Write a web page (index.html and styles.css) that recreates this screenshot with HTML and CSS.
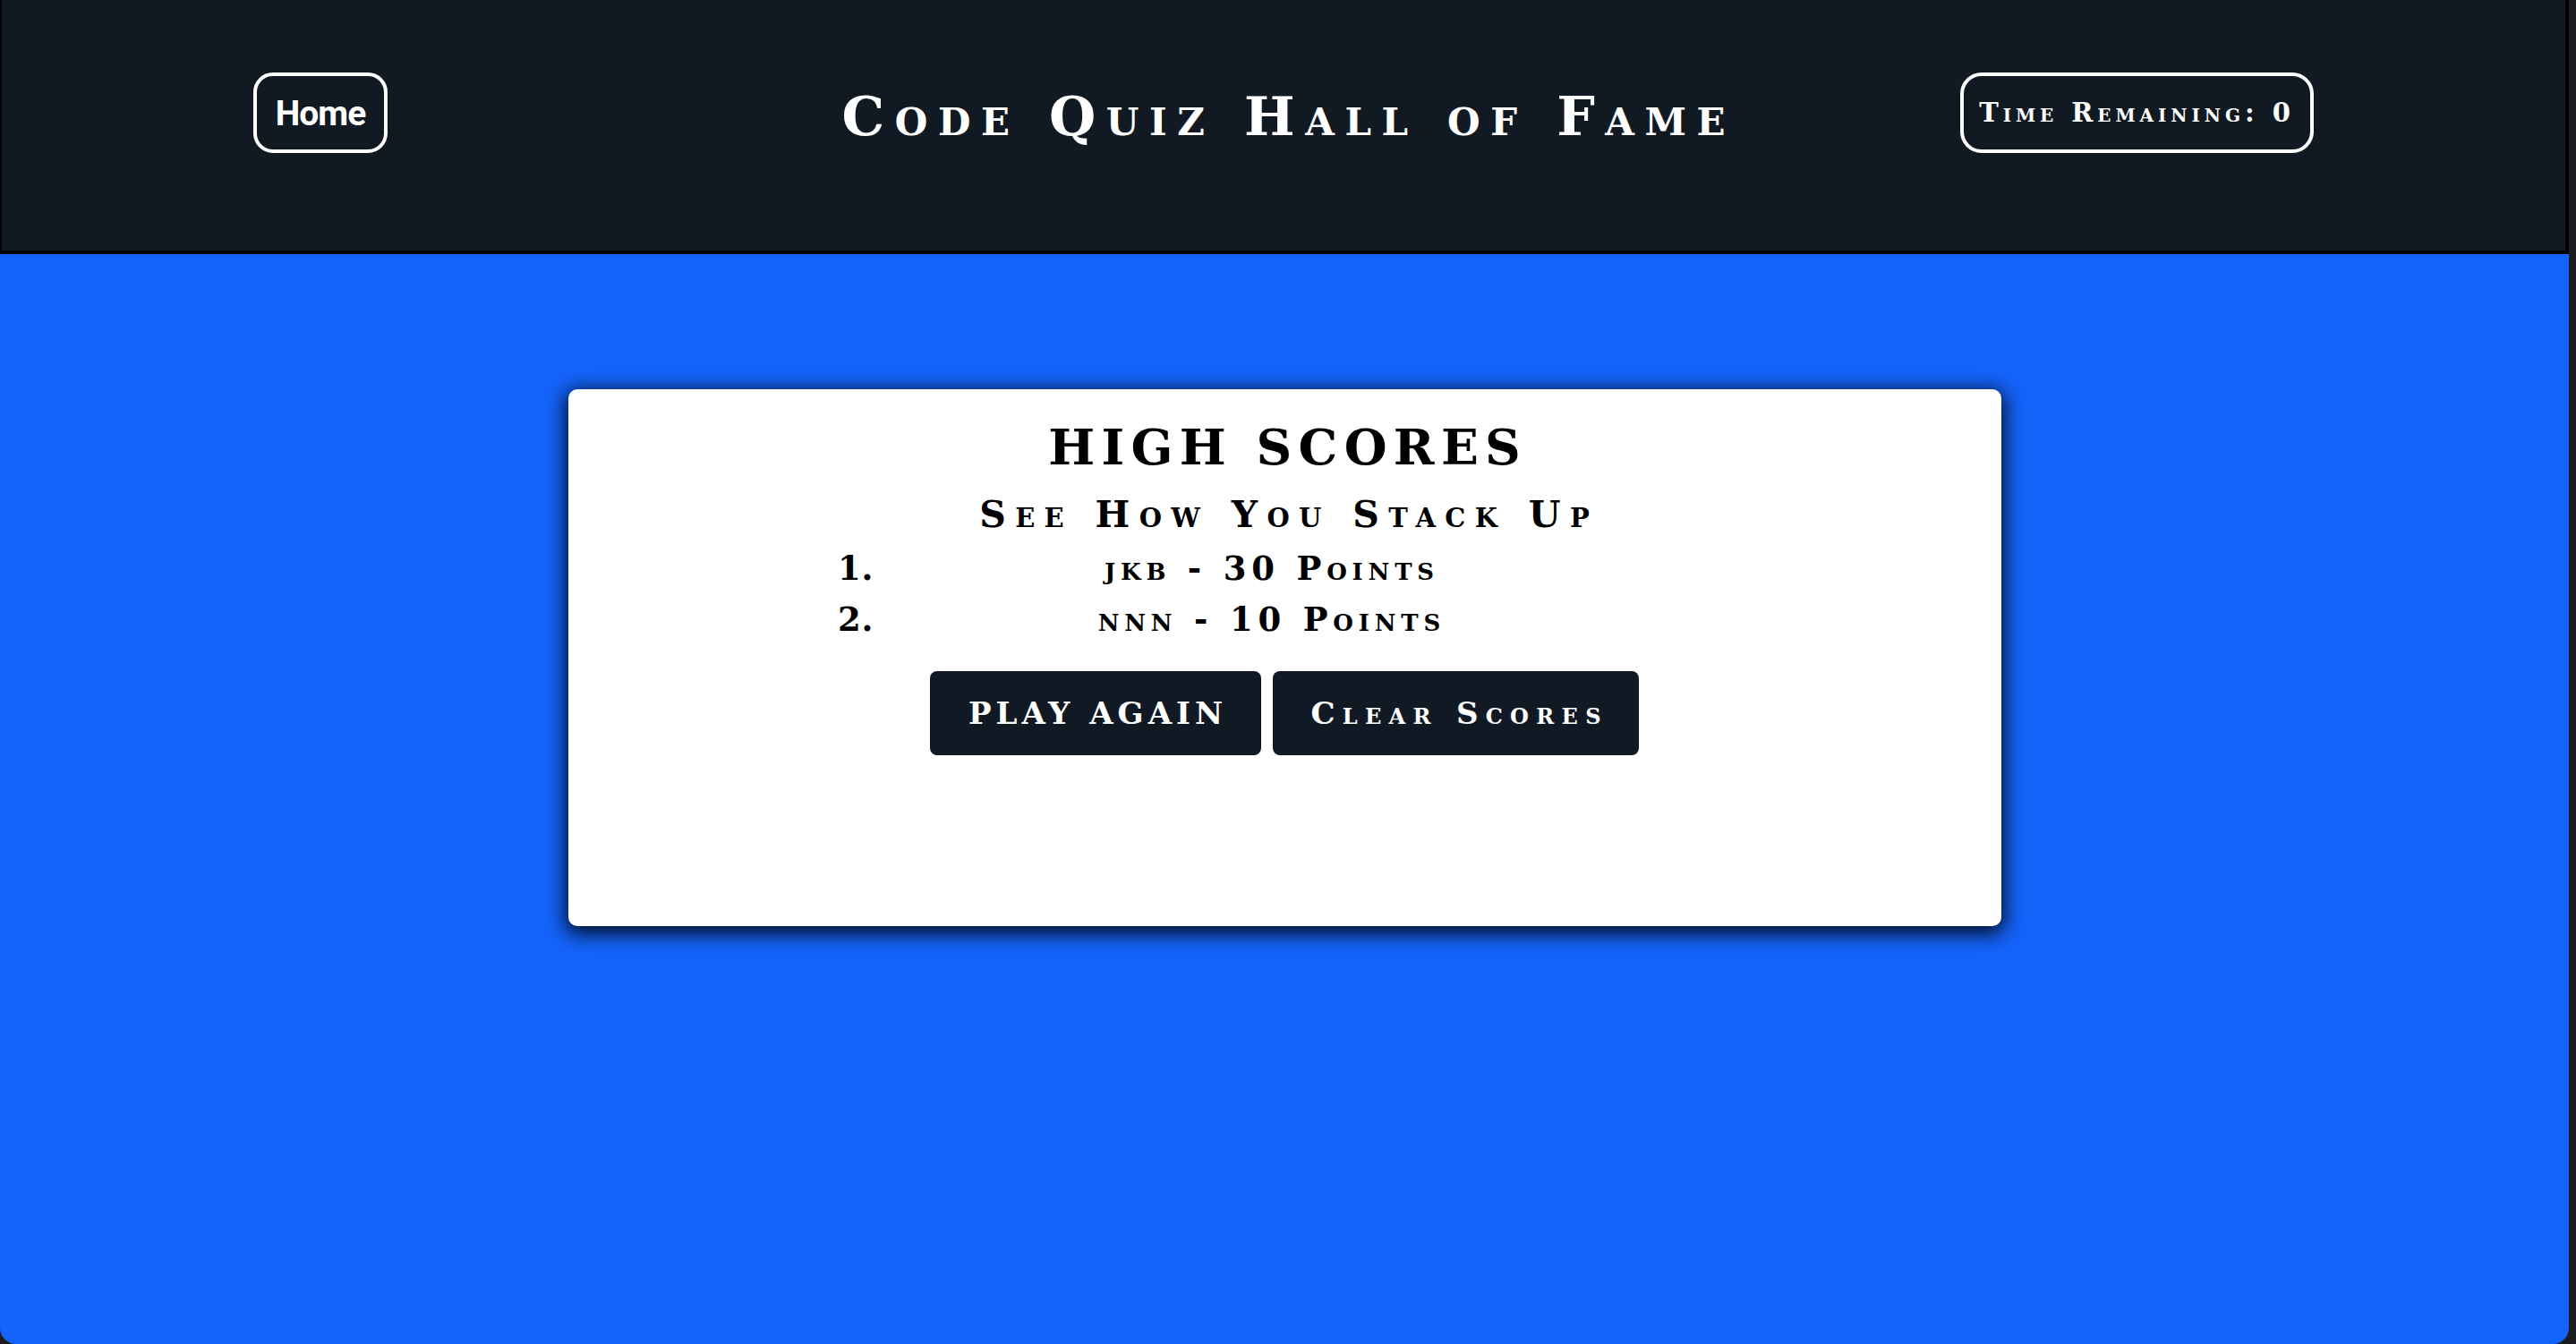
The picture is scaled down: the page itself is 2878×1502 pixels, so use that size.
FILE: index.html
```html
<!DOCTYPE html>
<html lang="en">
<head>
<meta charset="utf-8">
<title>Code Quiz Hall of Fame</title>
<link rel="stylesheet" href="styles.css">
</head>
<body>
<div class="window">
  <header class="topbar">
    <a class="home-btn" href="#">Home</a>
    <h1 class="site-title">Code Quiz Hall of Fame</h1>
    <div class="timer">Time Remaining: 0</div>
  </header>
  <main class="stage">
    <section class="card">
      <h2 class="card-title">HIGH SCORES</h2>
      <h3 class="card-sub">See How You Stack Up</h3>
      <ol class="scores">
        <li><span class="score-text">jkb - 30 Points</span></li>
        <li><span class="score-text">nnn - 10 Points</span></li>
      </ol>
      <div class="actions">
        <button class="btn btn-play"><span class="btn-label">PLAY AGAIN</span></button>
        <button class="btn btn-clear"><span class="btn-label">Clear Scores</span></button>
      </div>
    </section>
  </main>
</div>
</body>
</html>
```

FILE: styles.css
```css
* { box-sizing: border-box; }
html, body { margin: 0; padding: 0; }
body {
  background: #1c1c1e;
  width: 2878px;
  height: 1502px;
  overflow: hidden;
  font-family: "DejaVu Serif", serif;
}
.window {
  width: 2870px;
  height: 1502px;
  background: #1463fa;
  border-radius: 0 0 18px 18px;
  overflow: hidden;
  display: flex;
  flex-direction: column;
}
.topbar {
  flex: none;
  height: 284px;
  background: #111a22;
  border-left: 2px solid #000;
  border-right: 4px solid #000;
  border-bottom: 4px solid #000;
  display: grid;
  grid-template-columns: 1fr auto 1fr;
  align-items: center;
  padding: 0 281px 28px 281px;
}
.home-btn {
  justify-self: start;
  width: 150px;
  height: 90px;
  border: 4px solid #fff;
  border-radius: 22px;
  display: flex;
  align-items: center;
  justify-content: center;
  padding-top: 2px;
  color: #fff;
  text-decoration: none;
  font-family: Roboto, "Liberation Sans", sans-serif;
  font-weight: 700;
  font-size: 39px;
  letter-spacing: -1px;
  line-height: 1;
}
.site-title {
  margin: 0;
  padding: 8px 0 0 0.193em;
  color: #fff;
  font-size: 60px;
  font-weight: bold;
  font-variant: small-caps;
  letter-spacing: 0.193em;
  line-height: 1;
  white-space: nowrap;
}
.timer {
  justify-self: end;
  width: 395px;
  height: 90px;
  border: 4px solid #fff;
  border-radius: 24px;
  display: flex;
  align-items: center;
  justify-content: center;
  color: #fff;
  font-size: 29px;
  font-weight: bold;
  font-variant: small-caps;
  letter-spacing: 0.17em;
  line-height: 1;
  white-space: nowrap;
}
.stage {
  flex: 1;
  padding-top: 151px;
}
.card {
  width: 1601px;
  height: 600px;
  margin: 0 auto;
  background: #fff;
  border-radius: 10px;
  box-shadow: 0 5px 22px 3px rgba(0, 0, 0, 0.9);
  padding-top: 36.5px;
  text-align: center;
  color: #000;
}
.card-title {
  margin: 0;
  padding-left: 0.133em;
  font-size: 55px;
  font-weight: bold;
  line-height: 1;
  letter-spacing: 0.133em;
}
.card-sub {
  margin: 28.8px 0 0;
  padding-left: 0.252em;
  font-size: 41px;
  font-weight: bold;
  font-variant: small-caps;
  line-height: 1;
  letter-spacing: 0.252em;
}
.scores {
  margin: 10.9px 0 0 301.5px;
  padding: 0;
  width: 864px;
  list-style: none;
  counter-reset: rank;
  font-size: 37px;
  font-weight: bold;
  font-variant: small-caps;
  line-height: 56.7px;
}
.scores li {
  display: flex;
  counter-increment: rank;
}
.scores li::before {
  content: counter(rank) ".";
  flex: none;
  width: 100px;
  text-align: left;
  letter-spacing: 0.02em;
}
.score-text {
  flex: 1;
  text-align: center;
  letter-spacing: 0.157em;
  padding-left: 0.157em;
}
.actions {
  margin-top: 29.4px;
  display: flex;
  justify-content: center;
  gap: 13px;
}
.btn {
  height: 94px;
  padding: 0;
  background: #111a24;
  color: #fff;
  border: 0;
  border-radius: 8px;
  font-family: "DejaVu Serif", serif;
  font-size: 34px;
  font-weight: bold;
  font-variant: small-caps;
  line-height: 1;
}
.btn-play { width: 370px; letter-spacing: 0.147em; }
.btn-clear { width: 409px; letter-spacing: 0.244em; }
.btn-play .btn-label { padding-left: 0.147em; }
.btn-clear .btn-label { padding-left: 0.244em; }
```
